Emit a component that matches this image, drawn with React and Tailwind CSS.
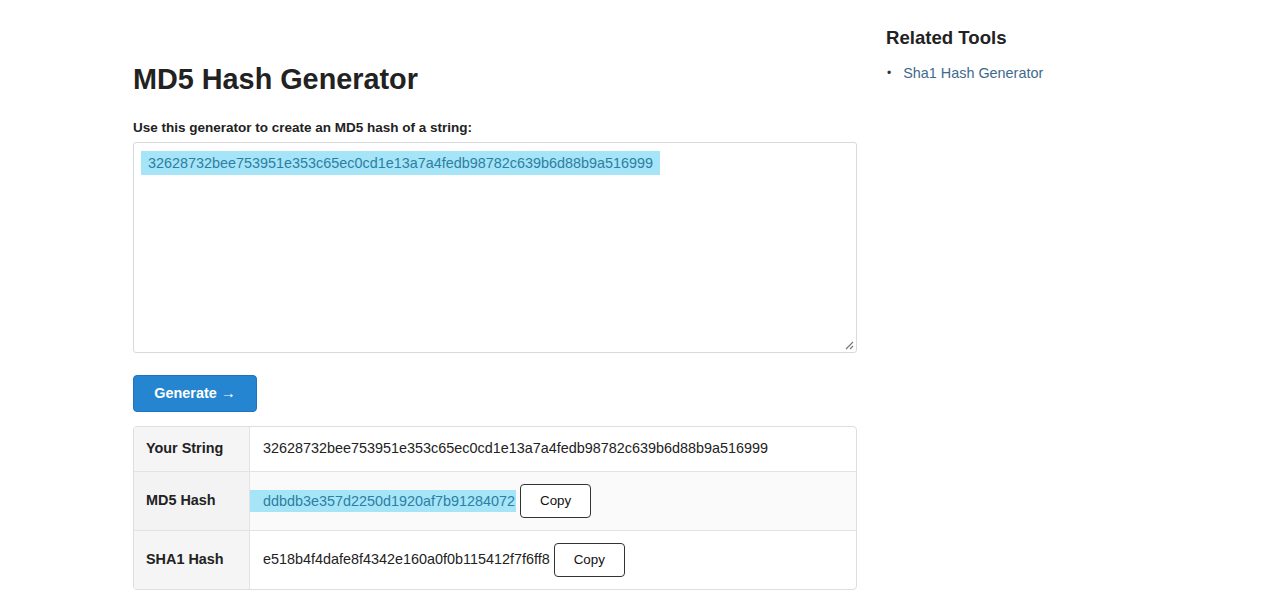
import React from 'react';

const font = { fontFamily: '"Liberation Sans", Arial, Helvetica, sans-serif' };

function CopyButton() {
  return (
    <button className="ml-[4px] h-[34px] w-[71px] rounded-[4px] border border-[#333] bg-white text-[13.33px] text-[#111] align-middle">
      Copy
    </button>
  );
}

export default function App() {
  const input = '32628732bee753951e353c65ec0cd1e13a7a4fedb98782c639b6d88b9a516999';

  return (
    <div className="min-h-[604px] bg-white text-[14.4px] text-[#222]" style={font}>
      <div className="flex gap-[29px] pl-[133px]">
        {/* Main column */}
        <main className="w-[724px] pt-[62px]">
          <h1 className="text-[28.8px] font-bold leading-[1.2] text-[#222]">MD5 Hash Generator</h1>

          <label className="mt-[22px] block text-[13.5px] font-bold leading-[18px] text-[#222]">
            Use this generator to create an MD5 hash of a string:
          </label>

          {/* textarea look-alike, shows the selected text */}
          <div className="relative mt-[5px] h-[211px] rounded-[3px] border border-[#d9d9d9] px-[7px] pt-[8px] leading-[24px]">
            <span className="inline-block bg-[#a6e4f8] px-[7px] text-[#2c7fa3]">{input}</span>
            <svg className="absolute bottom-[2px] right-[2px]" width="9" height="9" viewBox="0 0 9 9">
              <path d="M8 1 L1 8 M8 5 L5 8" stroke="#777" strokeWidth="1.2" />
            </svg>
          </div>

          <button className="mt-[22px] h-[37px] w-[124px] rounded-[4px] border border-[#1f74bd] bg-[#2585d0] font-bold text-white">
            Generate <span className="text-[15px]">→</span>
          </button>

          {/* Results table */}
          <div className="mt-[14px] overflow-hidden rounded-[4px] border border-[#dedede]">
            <div className="flex h-[45px] border-b border-[#e3e3e3]">
              <div className="flex w-[116px] items-center border-r border-[#e3e3e3] bg-[#f5f5f5] pl-[12px] font-bold">
                Your String
              </div>
              <div className="flex items-center pl-[13px]">{input}</div>
            </div>

            <div className="flex h-[59px] border-b border-[#e3e3e3] bg-[#fafafa]">
              <div className="flex w-[116px] items-center border-r border-[#e3e3e3] bg-[#f3f3f3] pl-[12px] font-bold">
                MD5 Hash
              </div>
              <div className="flex items-center">
                <span className="bg-[#a6e4f8] pl-[13px] pr-[1px] leading-[22px] text-[#2c7fa3]">
                  ddbdb3e357d2250d1920af7b91284072
                </span>
                <CopyButton />
              </div>
            </div>

            <div className="flex h-[58px]">
              <div className="flex w-[116px] items-center border-r border-[#e3e3e3] bg-[#f5f5f5] pl-[12px] font-bold">
                SHA1 Hash
              </div>
              <div className="flex items-center pl-[13px]">
                <span>e518b4f4dafe8f4342e160a0f0b115412f7f6ff8</span>
                <CopyButton />
              </div>
            </div>
          </div>
        </main>

        {/* Sidebar */}
        <aside className="pt-[26px]">
          <h3 className="text-[18.6px] font-bold leading-[24px] text-[#222]">Related Tools</h3>
          <ul className="mt-[13px]">
            <li className="flex items-center leading-[20px]">
              <span className="ml-[1px] mr-[12px] text-[12px] text-[#333]">•</span>
              <a href="#" className="text-[#41698c]">Sha1 Hash Generator</a>
            </li>
          </ul>
        </aside>
      </div>
    </div>
  );
}
